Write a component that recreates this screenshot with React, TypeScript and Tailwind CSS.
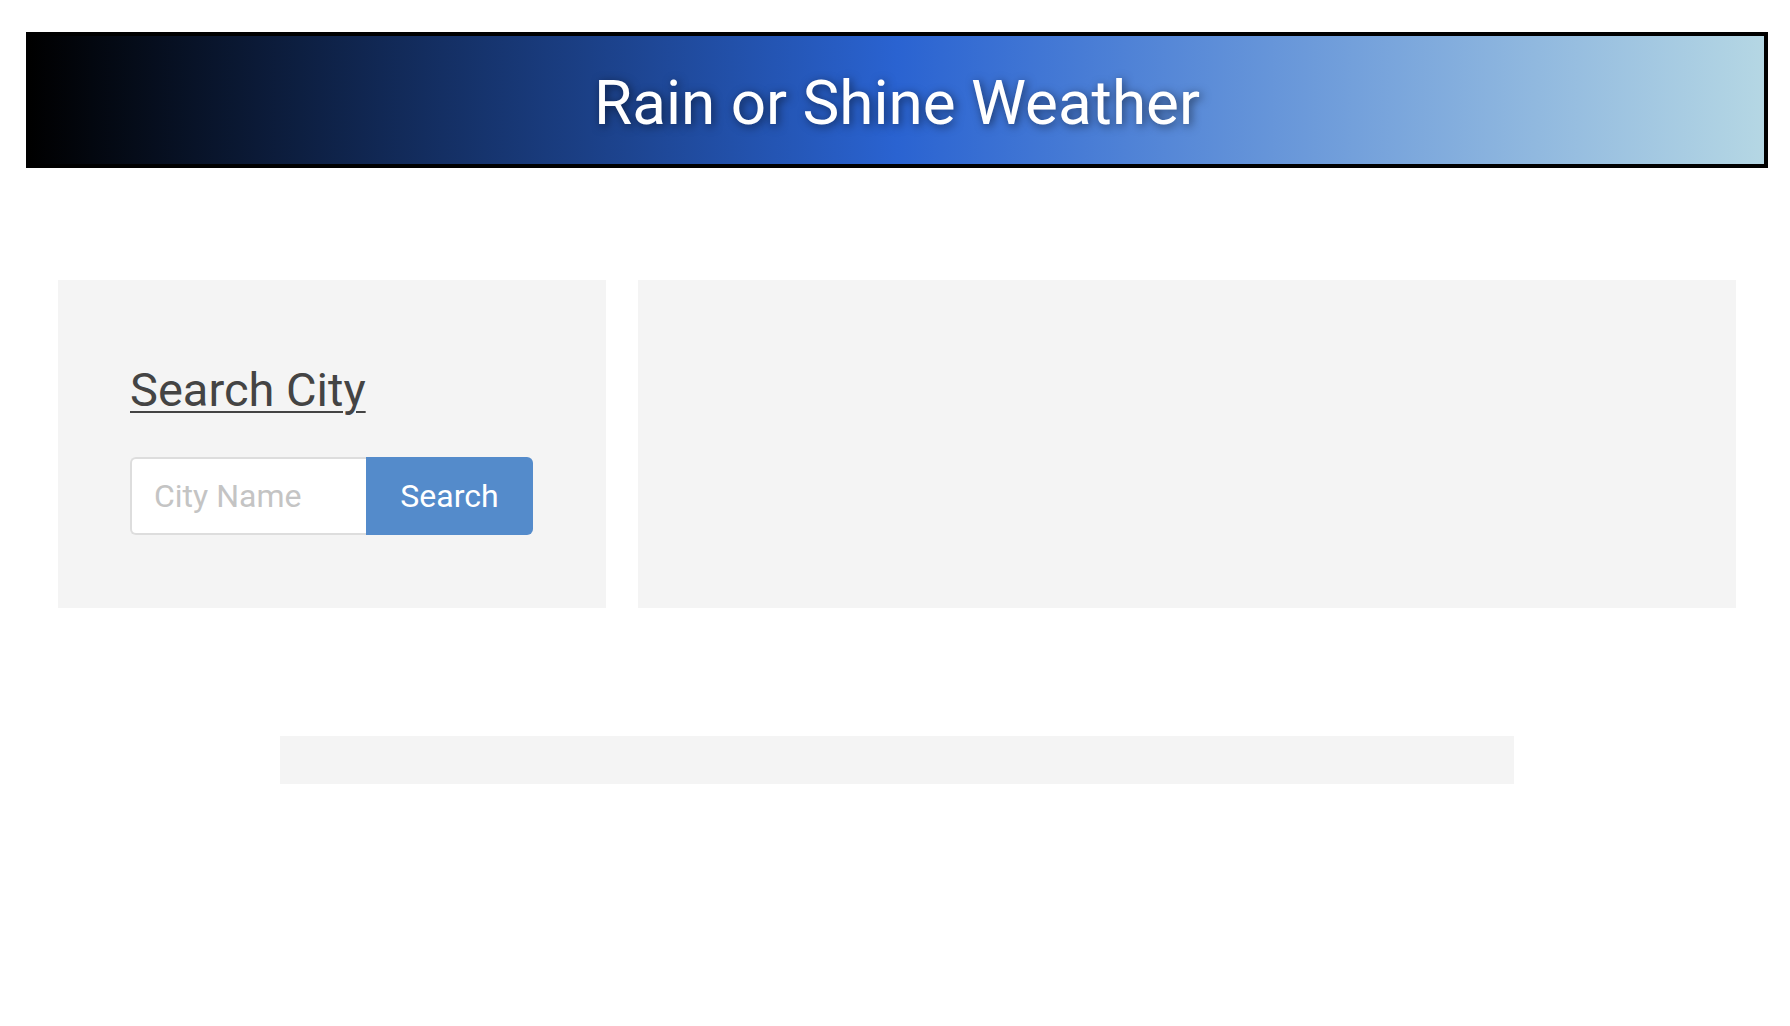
import React from "react";

export default function App() {
  return (
    <div className="min-h-screen bg-white font-['Roboto','Liberation_Sans',sans-serif]">
      <header className="ml-[26px] mt-[32px] box-border flex h-[136px] w-[1742px] items-center justify-center border-4 border-black bg-[linear-gradient(to_right,#000000,#2a63d1_50%,#b5d7e4)] pt-[5px]">
        <h1 className="text-[62px] font-normal leading-none text-white [text-shadow:2px_2px_10px_rgba(0,0,0,0.55)]">
          Rain or Shine Weather
        </h1>
      </header>

      <main className="mt-[112px] flex gap-[32px] pl-[58px] pr-[54px]">
        <section className="box-border w-[548px] shrink-0 bg-[#f4f4f4] px-[72px] pb-[73px] pt-[86px]">
          <h2 className="text-[47px] font-normal leading-none text-[#444444] underline decoration-2 underline-offset-[5px]">
            Search City
          </h2>
          <form
            className="mt-[44px] flex h-[78px]"
            onSubmit={(e) => e.preventDefault()}
          >
            <input
              type="text"
              placeholder="City Name"
              className="box-border h-full w-[236px] rounded-l-[6px] border-2 border-r-0 border-[#dddddd] bg-white pl-[22px] text-[32px] text-[#444] outline-none placeholder:text-[#c4c4c4]"
            />
            <button
              type="submit"
              className="h-full w-[167px] rounded-r-[6px] bg-[#548bcb] text-[32px] text-white"
            >
              Search
            </button>
          </form>
        </section>
        <section className="flex-1 bg-[#f4f4f4]" />
      </main>

      <div className="ml-[280px] mt-[128px] h-[48px] w-[1234px] bg-[#f4f4f4]" />
    </div>
  );
}
